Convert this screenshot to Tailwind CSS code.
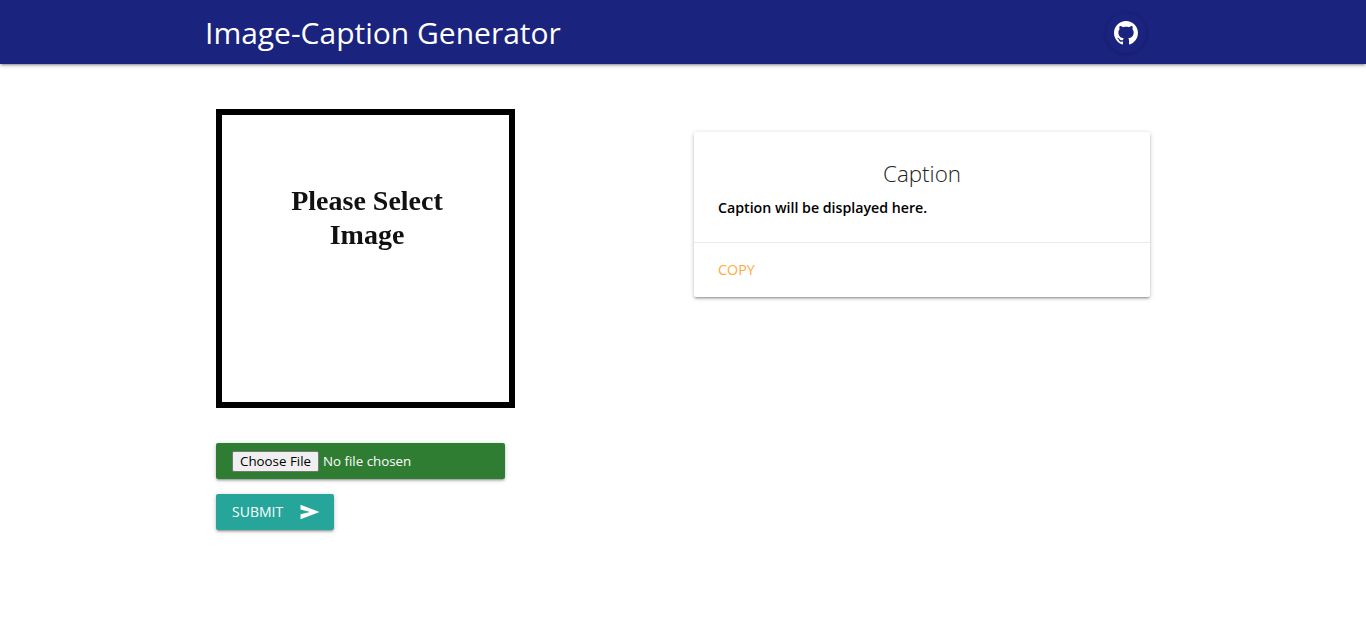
<!DOCTYPE html>
<html lang="en">
<head>
    <meta charset="UTF-8">
    <meta name="viewport" content="width=device-width, initial-scale=1.0">
    <title>Image-Caption Generator</title>
    <script src="https://cdn.jsdelivr.net/npm/@tailwindcss/browser@4"></script>
</head>
<body class="bg-white min-h-screen font-['Open_Sans','Noto_Sans',sans-serif]">
    <nav class="h-16 bg-[#1a237e] shadow-[0_2px_2px_0_rgba(0,0,0,0.14),0_3px_1px_-2px_rgba(0,0,0,0.12),0_1px_5px_0_rgba(0,0,0,0.2)]">
        <div class="w-[956px] ml-[205px] h-full flex items-center justify-between">
            <a href="#" class="text-white text-[30px] font-normal leading-none mt-[2px]">Image-Caption Generator</a>
            <a href="#" class="mr-[15px] mt-[2px] w-10 h-10 rounded-full bg-[#1a237e] shadow-[0_1px_4px_rgba(0,0,0,0.18)] flex items-center justify-center">
                <svg viewBox="0 0 16 16" class="w-6 h-6" fill="#fff"><path d="M8 0C3.58 0 0 3.58 0 8c0 3.54 2.29 6.53 5.47 7.59.4.07.55-.17.55-.38 0-.19-.01-.82-.01-1.49-2.01.37-2.53-.49-2.69-.94-.09-.23-.48-.94-.82-1.13-.28-.15-.68-.52-.01-.53.63-.01 1.08.58 1.23.82.72 1.21 1.87.87 2.33.66.07-.52.28-.87.51-1.07-1.78-.2-3.64-.89-3.64-3.95 0-.87.31-1.59.82-2.15-.08-.2-.36-1.02.08-2.12 0 0 .67-.21 2.2.82.64-.18 1.32-.27 2-.27s1.36.09 2 .27c1.53-1.04 2.2-.82 2.2-.82.44 1.1.16 1.92.08 2.12.51.56.82 1.27.82 2.15 0 3.07-1.87 3.75-3.65 3.95.29.25.54.73.54 1.48 0 1.07-.01 1.93-.01 2.2 0 .21.15.46.55.38A8.01 8.01 0 0 0 16 8c0-4.42-3.58-8-8-8z"/></svg>
            </a>
        </div>
    </nav>

    <main class="ml-[216px] flex items-start">
        <section class="w-[299px] mt-[45px]">
            <div class="w-[299px] h-[299px] border-[6px] border-black flex justify-center pt-[69px] pl-[3px] font-['Liberation_Serif',serif] font-bold text-[#111] text-[28px] leading-[34px] text-center">
                <p class="blur-[0.3px]">Please Select<br>Image</p>
            </div>
            <div class="mt-[35px] w-[289px] h-9 bg-[#2e7d32] rounded-[2px] shadow-[0_2px_2px_0_rgba(0,0,0,0.14),0_3px_1px_-2px_rgba(0,0,0,0.12),0_1px_5px_0_rgba(0,0,0,0.2)] flex items-center pl-4">
                <input type="file" class="w-[260px] text-white text-[13.33px] file:bg-[#efefef] file:text-black file:border file:border-[#767676] file:rounded-[2px] file:px-[7px] file:h-[21px] file:mr-1 file:text-[13.33px]">
            </div>
            <button class="mt-[15px] w-[118px] h-9 bg-[#26a69a] text-white text-sm rounded-[2px] shadow-[0_2px_2px_0_rgba(0,0,0,0.14),0_3px_1px_-2px_rgba(0,0,0,0.12),0_1px_5px_0_rgba(0,0,0,0.2)] flex items-center pl-4 gap-[17px]">
                SUBMIT
                <svg viewBox="0 0 20 16" class="w-5 h-4" fill="#fff"><path d="M0.5 0.8L19.5 8L0.5 15.2L0.5 10.2L10 8L0.5 5.4Z"/></svg>
            </button>
        </section>

        <section class="ml-[179px] mt-[68px] w-[456px] rounded-[2px] bg-white shadow-[0_2px_2px_0_rgba(0,0,0,0.14),0_3px_1px_-2px_rgba(0,0,0,0.12),0_1px_5px_0_rgba(0,0,0,0.2)]">
            <div class="h-[111px] px-6 pt-[26px] border-b border-[#e9e9e9]">
                <h2 class="text-[22.4px] font-light leading-[32px] text-center text-[#222]">Caption</h2>
                <p class="mt-[7px] text-[14.2px] font-semibold text-black leading-[22px]">Caption will be displayed here.</p>
            </div>
            <div class="h-[54px] px-6 flex items-center">
                <a href="#" class="text-[14.3px] font-normal text-[#ffab40]">COPY</a>
            </div>
        </section>
    </main>
</body>
</html>
